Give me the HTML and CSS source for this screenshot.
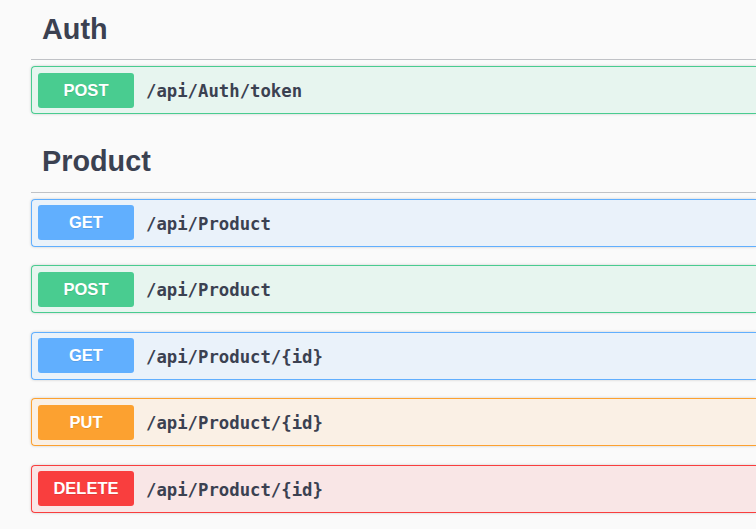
FILE: index.html
```html
<!DOCTYPE html>
<html lang="en">
  <head>
    <meta charset="UTF-8" />
    <meta name="viewport" content="width=device-width, initial-scale=1.0" />
    <title>Swagger UI</title>
    <link rel="stylesheet" href="styles.css">
  </head>
  <body>
    <div class="wrapper">
      <div class="tag-section">
        <h3 class="tag">Auth</h3>
        <div class="opblock post">
          <span class="method">POST</span>
          <span class="path">/api/Auth/token</span>
        </div>
      </div>
      <div class="tag-section">
        <h3 class="tag">Product</h3>
        <div class="opblock get">
          <span class="method">GET</span>
          <span class="path">/api/Product</span>
        </div>
        <div class="opblock post">
          <span class="method">POST</span>
          <span class="path">/api/Product</span>
        </div>
        <div class="opblock get">
          <span class="method">GET</span>
          <span class="path">/api/Product/{id}</span>
        </div>
        <div class="opblock put">
          <span class="method">PUT</span>
          <span class="path">/api/Product/{id}</span>
        </div>
        <div class="opblock delete">
          <span class="method">DELETE</span>
          <span class="path">/api/Product/{id}</span>
        </div>
      </div>
    </div>
  </body>
</html>
```

FILE: styles.css
```css
* {
  margin: 0;
  padding: 0;
  box-sizing: border-box;
}
body {
  background-color: #fafafa;
  font-family: "Liberation Sans", Arial, sans-serif;
  overflow: hidden;
}

/* the page is cut off on the right, so blocks run to the edge */
.wrapper {
  padding-left: 31px;
}

.tag {
  height: 60px;
  padding: 14.6px 0 0 11px;
  font-size: 28.8px;
  line-height: 28.8px;
  font-weight: 700;
  color: #3b4151;
  border-bottom: 1px solid rgba(59, 65, 81, 0.3);
  margin-bottom: 6px;
}

.opblock {
  display: flex;
  align-items: center;
  height: 48px;
  padding: 0 6px;
  margin-bottom: 18.5px;
  border: 1px solid #000;
  border-right-width: 0;
  border-radius: 4px 0 0 4px;
  box-shadow: 0 0 3px rgba(0, 0, 0, 0.19);
}

.method {
  width: 96px;
  height: 35px;
  line-height: 35px;
  border-radius: 3px;
  text-align: center;
  color: #fff;
  font-size: 16.5px;
  font-weight: 700;
  text-shadow: 0 1px 0 rgba(0, 0, 0, 0.1);
}

.path {
  margin-left: 12px;
  padding-top: 2px;
  font-family: "DejaVu Sans Mono", "Liberation Mono", monospace;
  font-size: 17.3px;
  font-weight: 700;
  color: #3b4151;
}

.post {
  background-color: rgba(73, 204, 144, 0.1);
  border-color: #49cc90;
}
.post .method {
  background-color: #49cc90;
}
.get {
  background-color: rgba(97, 175, 254, 0.1);
  border-color: #61affe;
}
.get .method {
  background-color: #61affe;
}
.put {
  background-color: rgba(252, 161, 48, 0.1);
  border-color: #fca130;
}
.put .method {
  background-color: #fca130;
}
.delete {
  background-color: rgba(249, 62, 62, 0.1);
  border-color: #f93e3e;
}
.delete .method {
  background-color: #f93e3e;
}
```
